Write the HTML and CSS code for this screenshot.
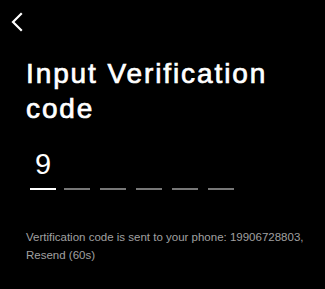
FILE: index.html
```html
<!DOCTYPE html>
<html lang="en">
<head>
  <meta charset="UTF-8" />
  <meta name="viewport" content="width=device-width, initial-scale=1.0" />
  <title>Input Verification code</title>
  <link rel="stylesheet" href="styles.css">
</head>
<body>
  <header class="top-bar">
    <button class="back-btn" aria-label="Back">
      <svg width="12" height="20" viewBox="0 0 12 20">
        <path d="M10 2 L2 10 L10 18" fill="none" stroke="#fff" stroke-width="2.2" stroke-linecap="square" />
      </svg>
    </button>
  </header>

  <main class="content">
    <h1 class="title">Input Verification code</h1>

    <div class="code-boxes">
      <div class="code-cell active"><span class="digit">9</span></div>
      <div class="code-cell"><span class="digit"></span></div>
      <div class="code-cell"><span class="digit"></span></div>
      <div class="code-cell"><span class="digit"></span></div>
      <div class="code-cell"><span class="digit"></span></div>
      <div class="code-cell"><span class="digit"></span></div>
    </div>

    <p class="hint">Vertification code is sent to your phone: 19906728803, Resend (60s)</p>
  </main>
</body>
</html>
```

FILE: styles.css
```css
body {
  margin: 0;
  background-color: #000;
  color: #fff;
  font-family: 'Liberation Sans', Arial, sans-serif;
  height: 100vh;
}

.top-bar {
  height: 56px;
  padding: 12px 0 0 11px;
  box-sizing: border-box;
}

.back-btn {
  background: none;
  border: 0;
  padding: 0;
  display: block;
  cursor: pointer;
}
.back-btn svg {
  display: block;
}

.content {
  padding: 0 0 0 26px;
}

.title {
  margin: 0;
  font-size: 28px;
  font-weight: normal;
  line-height: 35px;
  letter-spacing: 1.9px;
  width: 285px;
  -webkit-text-stroke: 0.7px #fff;
}

.code-boxes {
  display: flex;
  gap: 10px;
  margin: 20px 0 0 4px;
}

.code-cell {
  width: 26px;
  height: 42px;
  display: flex;
  flex-direction: column;
  justify-content: flex-end;
  align-items: center;
  border-bottom: 2px solid #777;
}
.code-cell.active {
  border-bottom-color: #fff;
  margin-right: -2px;
}

.digit {
  font-size: 29px;
  line-height: 34px;
  margin-bottom: 7px;
}

.hint {
  margin: 38px 0 0;
  font-size: 11.5px;
  line-height: 18px;
  color: #a0a0a0;
  width: 290px;
}
```
